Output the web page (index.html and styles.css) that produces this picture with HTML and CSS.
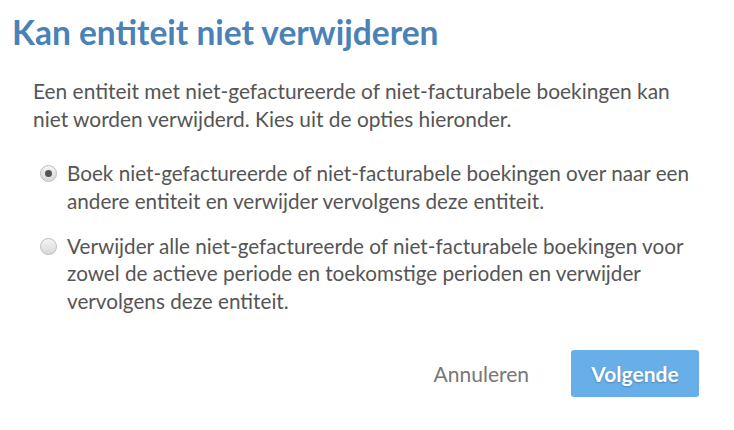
FILE: index.html
```html
<!DOCTYPE html>
<html lang="nl">
<head>
<meta charset="utf-8">
<link rel="stylesheet" href="styles.css">
</head>
<body>
<div class="dialog">
  <h1 class="title">Kan entiteit niet verwijderen</h1>
  <div class="body">
    <p class="intro">Een entiteit met niet-gefactureerde of niet-facturabele boekingen kan niet worden verwijderd. Kies uit de opties hieronder.</p>
    <label class="option">
      <span class="radio checked"></span>
      <span class="option-text">Boek niet-gefactureerde of niet-facturabele boekingen over naar een andere entiteit en verwijder vervolgens deze entiteit.</span>
    </label>
    <label class="option">
      <span class="radio"></span>
      <span class="option-text">Verwijder alle niet-gefactureerde of niet-facturabele boekingen voor zowel de actieve periode en toekomstige perioden en verwijder vervolgens deze entiteit.</span>
    </label>
  </div>
  <div class="footer">
    <button class="btn-link">Annuleren</button>
    <button class="btn-primary">Volgende</button>
  </div>
</div>
</body>
</html>
```

FILE: styles.css
```css
* { box-sizing: border-box; }
html, body { margin: 0; padding: 0; background: #fff; }
body {
  font-family: Lato, "Open Sans", sans-serif;
  color: #555;
  width: 734px;
  height: 430px;
  overflow: hidden;
}
.dialog {
  padding: 12px 30px 0 12px;
}
.title {
  margin: 0;
  font-size: 33.5px;
  font-weight: 700;
  line-height: 40px;
  color: #4a82b8;
}
.body {
  padding: 25px 0 0 21px;
}
.intro {
  margin: 0 0 27px;
  font-size: 20.9px;
  line-height: 28px;
}
.option {
  display: flex;
  align-items: flex-start;
  gap: 10px;
  margin-bottom: 17.5px;
  font-size: 20.7px;
  line-height: 27.5px;
}
.radio {
  flex: none;
  width: 17px;
  height: 17px;
  margin-top: 5px;
  margin-left: 7px;
  border-radius: 50%;
  border: 1px solid #bdbdbd;
  background: linear-gradient(#f4f4f4, #d9d9d9);
  display: flex;
  align-items: center;
  justify-content: center;
}
.radio.checked::after {
  content: "";
  width: 7px;
  height: 7px;
  border-radius: 50%;
  background: #555;
}
.footer {
  display: flex;
  justify-content: flex-end;
  align-items: center;
  gap: 42px;
  padding-top: 17px;
  margin-right: 5px;
}
button {
  font-family: inherit;
  font-size: 21px;
  border: 0;
  cursor: pointer;
}
.btn-link {
  background: none;
  color: #777;
  padding: 0;
}
.btn-primary {
  background: #68afe9;
  color: #fff;
  font-weight: 700;
  width: 128px;
  height: 47px;
  border-radius: 3px;
  text-shadow: 0 1px 2px rgba(0,0,0,0.25);
}
```
